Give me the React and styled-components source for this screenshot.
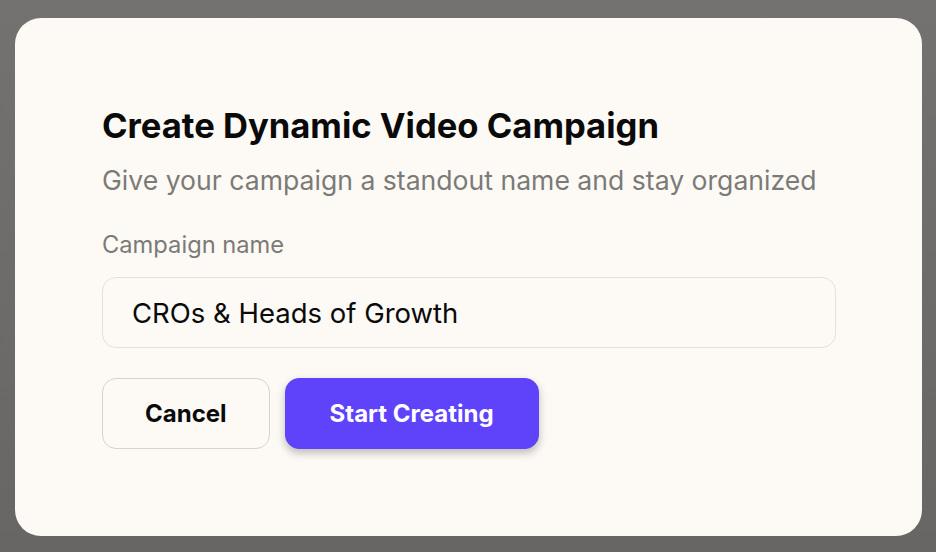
import styled, { createGlobalStyle } from 'styled-components';

const GlobalStyle = createGlobalStyle`
  html, body {
    margin: 0;
    padding: 0;
    height: 100%;
  }
  body {
    font-family: 'Inter', 'Liberation Sans', sans-serif;
    background: #6d6c6a;
  }
  #root {
    height: 100%;
  }
`;

export default function App() {
  return (
    <>
      <GlobalStyle />
      <Backdrop>
        <Modal>
          <Title>Create Dynamic Video Campaign</Title>
          <Subtitle>Give your campaign a standout name and stay organized</Subtitle>
          <Field>
            <Label htmlFor="campaign-name">Campaign name</Label>
            <Input id="campaign-name" defaultValue="CROs & Heads of Growth" />
          </Field>
          <Actions>
            <Button>Cancel</Button>
            <Button primary>Start Creating</Button>
          </Actions>
        </Modal>
      </Backdrop>
    </>
  );
}

const Backdrop = styled.div`
  box-sizing: border-box;
  height: 552px;
  padding: 18px 14px 16px 15px;
  background: linear-gradient(180deg, #737270 0%, #676664 100%);
`;

const Modal = styled.div`
  box-sizing: border-box;
  height: 100%;
  background: #fdfaf5;
  border-radius: 26px;
  padding: 87px 86px 0 87px;
  display: flex;
  flex-direction: column;
`;

const Title = styled.h2`
  margin: 0;
  font-size: 34.6px;
  line-height: 40px;
  font-weight: 700;
  color: #0a0a0a;
`;

const Subtitle = styled.p`
  margin: 19px 0 0;
  font-size: 26.6px;
  line-height: 32px;
  color: #7c7a77;
`;

const Field = styled.div`
  display: flex;
  flex-direction: column;
  margin-top: 35px;
`;

const Label = styled.label`
  font-size: 23.7px;
  line-height: 28px;
  color: #7c7a77;
`;

const Input = styled.input`
  box-sizing: border-box;
  margin-top: 18px;
  height: 71px;
  padding: 0 29px;
  border: 1px solid #e4e1dc;
  border-radius: 14px;
  background: #fdfaf5;
  font-family: inherit;
  font-size: 27.5px;
  color: #0a0a0a;
  outline: none;
`;

const Actions = styled.div`
  display: flex;
  gap: 15px;
  margin-top: 30px;
`;

const Button = styled.button`
  box-sizing: border-box;
  height: 71px;
  padding: 0 ${p => (p.primary ? '44px' : '42px')};
  border-radius: 14px;
  border: 1px solid ${p => (p.primary ? '#5f43fb' : '#d6d3ce')};
  background: ${p => (p.primary ? '#5f43fb' : '#fdfaf5')};
  color: ${p => (p.primary ? '#ffffff' : '#0a0a0a')};
  box-shadow: ${p => (p.primary ? '0 4px 8px rgba(0, 0, 0, 0.25)' : 'none')};
  font-family: inherit;
  font-size: 24px;
  font-weight: 700;
  cursor: pointer;
`;
